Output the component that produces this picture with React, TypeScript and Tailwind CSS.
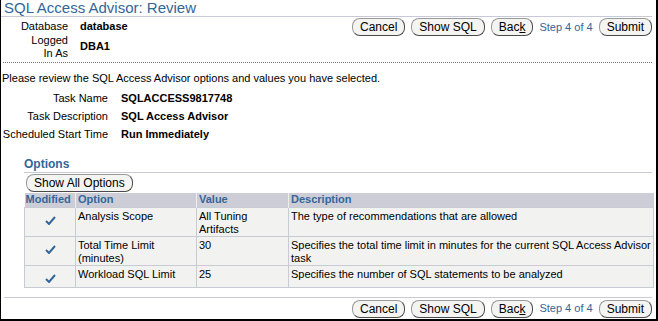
import React from "react";

function Btn({ label, u }: { label: string; u?: number }) {
  return (
    <button className="h-[18px] px-[7px] rounded-[8px] border border-[#9a9a9a] border-b-[#4a4a4a] border-r-[#4a4a4a] bg-[#f4f4f2] text-[12px] leading-[16px] text-black">
      {u === undefined ? (
        label
      ) : (
        <>
          {label.slice(0, u)}
          <span className="underline">{label[u]}</span>
          {label.slice(u + 1)}
        </>
      )}
    </button>
  );
}

function ButtonBar() {
  return (
    <div className="flex items-center gap-[6px]">
      <Btn label="Cancel" />
      <Btn label="Show SQL" />
      <Btn label="Back" u={3} />
      <span className="text-[#336699] text-[11px]">Step 4 of 4</span>
      <Btn label="Submit" />
    </div>
  );
}

const rows = [
  {
    option: "Analysis Scope",
    value: "All Tuning Artifacts",
    desc: "The type of recommendations that are allowed",
  },
  {
    option: "Total Time Limit (minutes)",
    value: "30",
    desc: "Specifies the total time limit in minutes for the current SQL Access Advisor task",
  },
  {
    option: "Workload SQL Limit",
    value: "25",
    desc: "Specifies the number of SQL statements to be analyzed",
  },
];

function Check() {
  return (
    <svg width="11" height="9" viewBox="0 0 11 9">
      <path d="M1 5 L4 8 L10 1" stroke="#336699" strokeWidth="2" fill="none" />
    </svg>
  );
}

export default function App() {
  return (
    <div className="w-[658px] h-[321px] bg-white border-l border-r-2 border-b-2 border-black overflow-hidden font-['Liberation_Sans',sans-serif] text-[11px] leading-[13px] text-black">
      <div className="mr-[4px] h-[17px] pl-[3px] border-b border-[#c8cad8] text-[15px] leading-[16px] text-[#336699]">
        SQL Access Advisor: Review
      </div>

      <div className="flex justify-between mr-[4px]">
        <div className="grid grid-cols-[67px_auto] gap-x-[12px] pt-[3px]">
          <span className="text-right">Database</span>
          <span className="font-bold">database</span>
          <span className="text-right mt-[1px]">
            Logged
            <br />
            In As
          </span>
          <span className="font-bold self-center">DBA1</span>
        </div>
        <div className="pt-[1px]">
          <ButtonBar />
        </div>
      </div>

      <div className="mt-[2px] mr-[4px] ml-[2px] border-b border-dotted border-[#777]" />

      <div className="pl-[1px] mt-[9px]">
        Please review the SQL Access Advisor options and values you have selected.
      </div>

      <div className="grid grid-cols-[107px_auto] gap-x-[13px] gap-y-[5px] mt-[7px] whitespace-nowrap">
        <span className="text-right">Task Name</span>
        <span className="font-bold">SQLACCESS9817748</span>
        <span className="text-right">Task Description</span>
        <span className="font-bold">SQL Access Advisor</span>
        <span className="text-right">Scheduled Start Time</span>
        <span className="font-bold">Run Immediately</span>
      </div>

      <div className="ml-[23px] mr-[4px] mt-[16px]">
        <div className="border-b border-[#c8cad8] text-[12px] font-bold leading-[15px] text-[#336699]">
          Options
        </div>
        <div className="mt-[1px] ml-[2px] h-[19px]">
          <Btn label="Show All Options" />
        </div>
        <table className="w-[630px] border-collapse table-fixed">
          <thead>
            <tr className="bg-[#cdcdd8] text-[#336699] font-bold text-left h-[14px]">
              <th className="w-[51px] pl-[1px] border-r border-[#eeeeee]">Modified</th>
              <th className="w-[121px] pl-[2px] border-r border-[#eeeeee]">Option</th>
              <th className="w-[92px] pl-[2px] border-r border-[#eeeeee]">Value</th>
              <th className="pl-[2px]">Description</th>
            </tr>
          </thead>
          <tbody>
            {rows.map((r) => (
              <tr key={r.option} className="bg-[#f2f3f1] align-top">
                <td className="border border-[#c9cbd4] pt-[1px]">
                  <div className="h-[20px] flex justify-center pt-[7px]">
                    <Check />
                  </div>
                </td>
                <td className="border border-[#c9cbd4] px-[2px] pt-[2px]">{r.option}</td>
                <td className="border border-[#c9cbd4] px-[2px] pt-[2px]">{r.value}</td>
                <td className="border border-[#c9cbd4] px-[2px] pt-[2px]">{r.desc}</td>
              </tr>
            ))}
          </tbody>
        </table>
      </div>

      <div className="mt-[9px] mr-[4px] ml-[3px] border-b border-[#c8cad8]" />
      <div className="flex justify-end mr-[4px] mt-[2px]">
        <ButtonBar />
      </div>
    </div>
  );
}
